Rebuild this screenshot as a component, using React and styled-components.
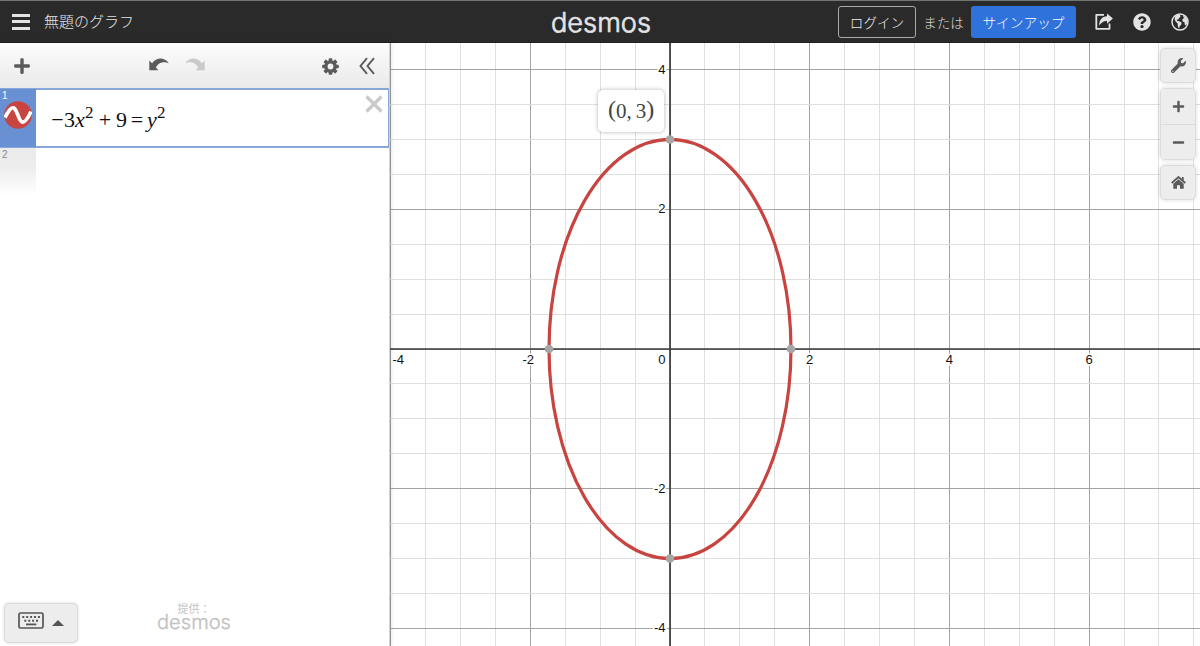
import React from 'react';
import styled, { createGlobalStyle } from 'styled-components';
import {
  FaPlus,
  FaMinus,
  FaWrench,
  FaQuestionCircle
} from 'react-icons/fa';

const UNIT = 69.85;
const ORIGIN = { x: 280, y: 306 };
const WIDTH = 810;
const HEIGHT = 603;

const toX = n => ORIGIN.x + n * UNIT;
const toY = n => ORIGIN.y - n * UNIT;
const snap = n => Math.floor(n) + 0.5;

const range = (from, to) => {
  const list = [];
  for (let n = from; n <= to; n += 0.5) list.push(n);
  return list;
};

const UndoIcon = ({ flip }) => (
  <svg width="20" height="13" viewBox="0 0 20 13">
    <path
      transform={flip ? 'translate(20 0) scale(-1 1)' : undefined}
      fill="currentColor"
      d="M0.3 2.4V12.3H9.4L6.9 9.6C8.7 5.6 13.5 2.9 19.8 5.2C15.6-.8 7.6-1 3.1 5.2Z"
    />
  </svg>
);

const GearIcon = () => (
  <svg width="17" height="17" viewBox="0 0 17 17">
    <circle cx="8.5" cy="8.5" r="4.6" fill="none" stroke="currentColor" strokeWidth="3.4" />
    {[0, 45, 90, 135, 180, 225, 270, 315].map(angle => (
      <rect
        key={angle}
        x="6.7"
        y="0.2"
        width="3.6"
        height="3.4"
        rx="0.7"
        fill="currentColor"
        transform={`rotate(${angle} 8.5 8.5)`}
      />
    ))}
  </svg>
);

const ShareIcon = () => (
  <svg width="18" height="17" viewBox="0 0 18 17">
    <path
      d="M9 1.8H1.3V15.8H14.5V10.5"
      fill="none"
      stroke="currentColor"
      strokeWidth="1.8"
      strokeLinejoin="round"
    />
    <path
      d="M12 0.6L17.9 5.6L12 10.8V7.9C8.6 7.7 6.3 9.3 4.2 12.6C4.1 7.1 7 3.6 12 3.3Z"
      fill="currentColor"
    />
  </svg>
);

const GlobeIcon = () => (
  <svg width="18" height="18" viewBox="0 0 18 18">
    <circle cx="9" cy="9" r="8" fill="none" stroke="currentColor" strokeWidth="1.5" />
    <path
      d="M4 3.8L6.4 1.6L9.6 1.5L8.9 2.9L9.7 3.8L8.1 5.1L7.3 6.4L5.6 6.7L6.4 8L8.3 8.3L10.6 9.6L10.2 11.7L8.8 13L8.1 15.4L6.9 13.4L6.7 10.6L4.8 8.8L3.7 6.4Z"
      fill="currentColor"
    />
    <path
      d="M11.9 2.2L14.8 4L16.4 7.3V10.5L14.8 12.4L13.6 11.2L13.6 9.2L11.7 8.4L11.3 6.6L12.6 5.2L13.6 5.2L12.4 4Z"
      fill="currentColor"
    />
  </svg>
);

const HomeIcon = () => (
  <svg width="15" height="13" viewBox="0 0 15 13">
    <path
      d="M0.7 7L7.5 1L14.3 7M11.8 1V4.5"
      fill="none"
      stroke="currentColor"
      strokeWidth="1.8"
    />
    <path d="M2.3 7.8L7.5 3.3L12.7 7.8V12.8H9V9.2H6V12.8H2.3Z" fill="currentColor" />
  </svg>
);

const KeyboardIcon = () => (
  <svg width="26" height="17" viewBox="0 0 26 17">
    <rect x="1" y="1" width="24" height="15" rx="1.5" fill="none" stroke="currentColor" strokeWidth="1.7" />
    <path
      d="M4.3 5H22M6.3 8.8H20"
      stroke="currentColor"
      strokeWidth="1.9"
      strokeDasharray="2 1.9"
    />
    <path d="M8 12.4H18.3" stroke="currentColor" strokeWidth="1.8" />
  </svg>
);

const Wordmark = ({ width, height, size, weight }) => (
  <WordmarkBox width={width} height={height} viewBox={`0 0 ${width} ${height}`}>
    <WordmarkText
      x="0"
      y={height - 8}
      fontSize={size}
      strokeWidth={weight}
      textLength={width}
      lengthAdjust="spacingAndGlyphs"
    >
      desmos
    </WordmarkText>
  </WordmarkBox>
);

const Graph = () => (
  <Canvas viewBox={`0 0 ${WIDTH} ${HEIGHT}`}>
    {range(-4, 7.5).map(n => (
      <GridLine key={n} major={n % 2 === 0 ? 1 : 0} x1={snap(toX(n))} x2={snap(toX(n))} y1="0" y2={HEIGHT} />
    ))}
    {range(-4, 4).map(n => (
      <GridLine key={n} major={n % 2 === 0 ? 1 : 0} y1={snap(toY(n))} y2={snap(toY(n))} x1="0" x2={WIDTH} />
    ))}
    <Axis x1={ORIGIN.x} x2={ORIGIN.x} y1="0" y2={HEIGHT} />
    <Axis x1="0" x2={WIDTH} y1={ORIGIN.y} y2={ORIGIN.y} />
    {[-2, 2, 4, 6].map(n => (
      <Label key={n} x={toX(n) + (n < 0 ? -2 : 0)} y="321" textAnchor="middle">
        {n}
      </Label>
    ))}
    <Label x="2.5" y="321">-4</Label>
    <Label x="275.5" y="321" textAnchor="end">0</Label>
    {[-4, -2, 2, 4].map(n => (
      <Label key={n} x="275.5" y={toY(n) + 4} textAnchor="end">
        {n}
      </Label>
    ))}
    <Curve cx={ORIGIN.x} cy={ORIGIN.y} rx={Math.sqrt(3) * UNIT} ry={3 * UNIT} />
    <Point cx={toX(0)} cy={toY(3)} r="4.3" />
    <Point cx={toX(0)} cy={toY(-3)} r="4.3" />
    <Point cx={toX(Math.sqrt(3))} cy={toY(0)} r="4.3" />
    <Point cx={toX(-Math.sqrt(3))} cy={toY(0)} r="4.3" />
  </Canvas>
);

const App = () => (
  <Page>
    <GlobalStyle />
    <Header>
      <HeaderSide>
        <Menu>
          <MenuBar />
          <MenuBar />
          <MenuBar />
        </Menu>
        <Title>無題のグラフ</Title>
      </HeaderSide>
      <Wordmark width={100} height={37} size={26.5} weight={0.7} />
      <HeaderSide end>
        <Login>ログイン</Login>
        <Or>または</Or>
        <SignUp>サインアップ</SignUp>
        <HeaderIcons>
          <ShareIcon />
          <FaQuestionCircle size={18} />
          <GlobeIcon />
        </HeaderIcons>
      </HeaderSide>
    </Header>
    <Main>
      <Sidebar>
        <Toolbar>
          <FaPlus size={18} />
          <History>
            <UndoIcon />
            <Redo>
              <UndoIcon flip />
            </Redo>
          </History>
          <Tools>
            <GearIcon />
            <svg width="16" height="18" viewBox="0 0 16 18">
              <path d="M8 1.2L1.5 9L8 16.8M15 1.2L8.5 9L15 16.8" fill="none" stroke="currentColor" strokeWidth="1.9" />
            </svg>
          </Tools>
        </Toolbar>
        <Expression>
          <ActiveTab>
            <Index>1</Index>
            <svg width="28" height="28" viewBox="0 0 28 28">
              <circle cx="14" cy="14" r="13.8" fill="#c74440" />
              <path
                d="M1 16.5C4 11 7 5.6 9.8 7C13.5 9 14.5 20 18.1 21C21 21.6 24.5 16 27 10.5"
                fill="none"
                stroke="#fff"
                strokeWidth="3.7"
              />
            </svg>
          </ActiveTab>
          <Formula>
            <Op width={13}>−</Op>
            <Digit>3</Digit>
            <Var>x</Var>
            <Power>2</Power>
            <Op width={22}>+</Op>
            <Digit>9</Digit>
            <Op width={20}>=</Op>
            <Var>y</Var>
            <Power>2</Power>
          </Formula>
          <Close width="18" height="18" viewBox="0 0 18 18">
            <path d="M1.5 1.5L16.5 16.5M16.5 1.5L1.5 16.5" stroke="#c9c9c9" strokeWidth="3.2" />
          </Close>
        </Expression>
        <EmptyTab>2</EmptyTab>
        <Footer>
          <Keypad>
            <KeyboardIcon />
            <Caret />
          </Keypad>
          <Powered>
            <span>提供：</span>
            <Wordmark width={74} height={21} size={19.5} weight={0.3} />
          </Powered>
        </Footer>
      </Sidebar>
      <GraphPaper>
        <Graph />
        <Tooltip>
          <Paren>(</Paren>0<Comma>,</Comma>3<Paren>)</Paren>
        </Tooltip>
        <Controls>
          <Control>
            <FaWrench size={15} />
          </Control>
          <ControlGroup>
            <Control grouped>
              <FaPlus size={13} />
            </Control>
            <Control grouped>
              <FaMinus size={13} />
            </Control>
          </ControlGroup>
          <Control>
            <HomeIcon />
          </Control>
        </Controls>
      </GraphPaper>
    </Main>
  </Page>
);

const GlobalStyle = createGlobalStyle`
  * {
    box-sizing: border-box;
  }
  body {
    margin: 0;
    overflow: hidden;
    font-family: "Liberation Sans", "Noto Sans CJK JP", sans-serif;
  }
  svg {
    display: block;
    flex: none;
  }
  button {
    font-family: inherit;
    padding: 0;
  }
`;

const Page = styled.div`
  display: flex;
  flex-direction: column;
  width: 1200px;
  height: 646px;
  background: #fff;
`;

const Header = styled.header`
  display: flex;
  flex: none;
  align-items: center;
  height: 43px;
  padding: 0 11px 0 12px;
  color: #e3e3e3;
  background: #2a2a2a;
  border-top: 1px solid #717573;
  border-bottom: 1px solid #202020;
`;

const HeaderSide = styled.div.withConfig({
  shouldForwardProp: prop => prop !== 'end'
})`
  display: flex;
  flex: 1;
  align-items: center;
  justify-content: ${({ end }) => (end ? 'flex-end' : 'flex-start')};
`;

const Menu = styled.div`
  display: flex;
  flex-direction: column;
  gap: 3.5px;
  width: 18px;
`;

const MenuBar = styled.div`
  height: 3px;
  background: #e3e3e3;
`;

const Title = styled.div`
  margin-left: 14px;
  font-size: 15px;
  font-weight: 300;
  line-height: 20px;
`;

const WordmarkBox = styled.svg`
  overflow: visible;
`;

const WordmarkText = styled.text`
  font-family: Inter, sans-serif;
  font-weight: 300;
  font-optical-sizing: none;
  font-variation-settings: "opsz" 14;
  fill: currentColor;
  stroke: currentColor;
  stroke-linejoin: round;
`;

const Login = styled.button`
  width: 78px;
  height: 32px;
  color: #eee;
  font-size: 13.6px;
  font-weight: 300;
  background: transparent;
  border: 1px solid #aaa;
  border-radius: 3px;
`;

const Or = styled.span`
  width: 55px;
  color: #ddd;
  font-size: 13.5px;
  font-weight: 300;
  text-align: center;
`;

const SignUp = styled.button`
  width: 105px;
  height: 32px;
  color: #fff;
  font-size: 13.7px;
  font-weight: 300;
  background: #2f72dc;
  border: none;
  border-radius: 3px;
`;

const HeaderIcons = styled.div`
  display: flex;
  align-items: center;
  gap: 20px;
  margin-left: 19px;
`;

const Main = styled.main`
  display: flex;
  flex: 1;
`;

const Sidebar = styled.aside`
  display: flex;
  flex-direction: column;
  width: 390px;
  border-right: 1px solid #d2d2d2;
  box-shadow: 0 0 5px rgba(0, 0, 0, 0.2);
  z-index: 1;
`;

const Toolbar = styled.div`
  display: flex;
  align-items: center;
  height: 45px;
  padding: 1px 14px 0 13px;
  color: #5b5b5b;
  background: linear-gradient(#fcfcfc, #eaeaea);
`;

const History = styled.div`
  display: flex;
  gap: 16px;
  margin: -3px 0 0 118px;
`;

const Redo = styled.span`
  color: #cacaca;
`;

const Tools = styled.div`
  display: flex;
  align-items: center;
  gap: 20px;
  margin-left: auto;
`;

const Expression = styled.div`
  display: flex;
  height: 60px;
  border: 2px solid #88a7da;
  border-left: none;
  border-right-width: 1px;
`;

const ActiveTab = styled.div`
  display: flex;
  flex-direction: column;
  align-items: center;
  width: 36px;
  margin: -1px 0;
  background: #6890d2;
`;

const Index = styled.span`
  align-self: flex-start;
  height: 12px;
  padding: 2px 0 0 2px;
  color: #fff;
  font-size: 10px;
  line-height: 10px;
`;

const Formula = styled.div`
  display: flex;
  flex: 1;
  align-items: center;
  padding: 3px 0 0 15px;
  font-family: "Liberation Serif", serif;
  font-size: 22px;
  color: #111;
`;

const Op = styled.span.withConfig({
  shouldForwardProp: prop => prop !== 'width'
})`
  width: ${({ width }) => width}px;
  text-align: center;
`;

const Digit = styled.span`
  width: 11px;
`;

const Var = styled.i`
  width: 10px;
`;

const Power = styled.sup`
  width: 9px;
  font-size: 17px;
  line-height: 18px;
  margin-bottom: 13px;
`;

const Close = styled.svg`
  margin: 5px 5px 0 0;
`;

const EmptyTab = styled.div`
  width: 36px;
  height: 47px;
  padding: 2px;
  color: #888;
  font-size: 10px;
  line-height: 10px;
  background: linear-gradient(#ebebeb, #ededed 40%, #fff);
`;

const Footer = styled.div`
  display: flex;
  align-items: flex-end;
  margin-top: auto;
  padding: 0 0 3px 4px;
`;

const Keypad = styled.button`
  display: flex;
  align-items: center;
  justify-content: center;
  gap: 8px;
  width: 74px;
  height: 40px;
  padding-bottom: 5px;
  color: #555;
  background: #ededed;
  border: 1px solid #dadada;
  border-radius: 5px;
  box-shadow: 0 0 3px rgba(0, 0, 0, 0.15);
`;

const Caret = styled.span`
  border: 6px solid transparent;
  border-top: none;
  border-bottom: 6px solid #555;
  margin-top: 5px;
`;

const Powered = styled.div`
  display: flex;
  flex-direction: column;
  align-items: center;
  margin: 0 0 6px 79px;
  color: #c2c2c2;
  font-size: 11px;
  line-height: 13px;
`;

const GraphPaper = styled.section`
  position: relative;
  width: ${WIDTH}px;
`;

const Canvas = styled.svg`
  width: ${WIDTH}px;
  height: ${HEIGHT}px;
`;

const GridLine = styled.line`
  stroke: ${({ major }) => (major ? '#a3a3a3' : '#dfdfdf')};
`;

const Axis = styled.line`
  stroke: #3a3a3a;
  stroke-width: 1.7;
`;

const Label = styled.text`
  font-size: 13px;
  fill: #111;
  stroke: #fff;
  stroke-width: 3px;
  paint-order: stroke;
`;

const Curve = styled.ellipse`
  fill: none;
  stroke: #c74440;
  stroke-width: 3.2;
`;

const Point = styled.circle`
  fill: #a5a5a5;
`;

const Tooltip = styled.div`
  position: absolute;
  top: 47px;
  left: 208px;
  display: flex;
  align-items: center;
  justify-content: center;
  width: 66px;
  height: 42px;
  color: #444;
  font-family: "Liberation Serif", serif;
  font-size: 21px;
  background: #fff;
  border-radius: 5px;
  box-shadow: 0 0 4px rgba(0, 0, 0, 0.3);
`;

const Paren = styled.span`
  font-size: 24px;
  margin-top: -3px;
`;

const Comma = styled.span`
  margin-right: 4px;
`;

const Controls = styled.div`
  position: absolute;
  top: 5px;
  right: 4px;
  display: flex;
  flex-direction: column;
  gap: 5px;
`;

const Control = styled.button.withConfig({
  shouldForwardProp: prop => prop !== 'grouped'
})`
  display: flex;
  align-items: center;
  justify-content: center;
  width: ${({ grouped }) => (grouped ? 34 : 36)}px;
  height: 35px;
  color: #5a5a5a;
  background: #ededed;
  border: ${({ grouped }) => (grouped ? 'none' : '1px solid #dcdcdc')};
  border-radius: ${({ grouped }) => (grouped ? 0 : 5)}px;
  box-shadow: ${({ grouped }) =>
    grouped ? 'none' : '0 0 4px rgba(0, 0, 0, 0.15)'};

  & + & {
    border-top: ${({ grouped }) => (grouped ? '1px solid #dcdcdc' : '')};
  }
`;

const ControlGroup = styled.div`
  border: 1px solid #dcdcdc;
  border-radius: 5px;
  overflow: hidden;
  box-shadow: 0 0 4px rgba(0, 0, 0, 0.15);
`;

export default App;
